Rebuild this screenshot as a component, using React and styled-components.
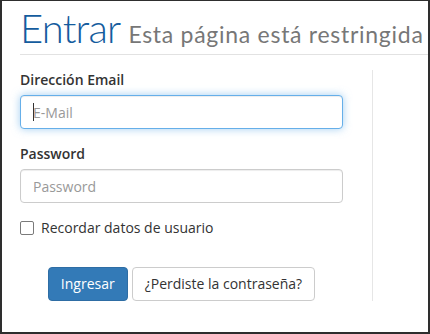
import React from "react";
import styled, { createGlobalStyle } from "styled-components";

const GlobalStyle = createGlobalStyle`
  html, body {
    margin: 0;
    padding: 0;
    background: #fff;
  }
  body {
    font-family: "Open Sans", "Liberation Sans", sans-serif;
    font-size: 14px;
    color: #333;
  }
`;

const Frame = styled.div`
  box-sizing: border-box;
  width: 430px;
  height: 334px;
  border: 2px solid #2e2e2e;
  border-top-width: 1px;
  padding-left: 18px;
  overflow: hidden;
  background: #fff;
`;

const Header = styled.h1`
  display: flex;
  align-items: baseline;
  gap: 8px;
  margin: 5px 0 0;
  padding-bottom: 4px;
  border-bottom: 1px solid #e2e2e2;
  font-family: Lato, "Liberation Sans", sans-serif;
  font-weight: 400;
  white-space: nowrap;
`;

const Title = styled.span`
  font-size: 40px;
  line-height: 44px;
  font-weight: 300;
  letter-spacing: -0.8px;
  color: #145c9e;
`;

const Sub = styled.small`
  font-size: 23px;
  line-height: 24px;
  font-weight: 400;
  letter-spacing: 0.72px;
  color: #777;
`;

const Row = styled.div`
  display: flex;
  margin-top: 15px;
`;

const Column = styled.form`
  box-sizing: border-box;
  width: 353px;
  padding-right: 29px;
  border-right: 1px solid #e6e6e6;
  display: flex;
  flex-direction: column;
`;

const Group = styled.div`
  margin-bottom: 15px;
`;

const Label = styled.label`
  display: block;
  font-weight: 600;
  font-size: 14px;
  line-height: 20px;
  margin-bottom: 5px;
  color: #333;
`;

const Field = styled.div`
  position: relative;
`;

const Input = styled.input`
  box-sizing: border-box;
  display: block;
  width: 100%;
  height: 34px;
  padding: 6px 12px;
  font-family: "Open Sans", "Liberation Sans", sans-serif;
  font-size: 14px;
  color: #555;
  background: #fff;
  border: 1px solid ${(p) => (p.$focused ? "#66afe9" : "#ccc")};
  border-radius: 4px;
  outline: none;
  box-shadow: ${(p) =>
    p.$focused
      ? "inset 0 1px 1px rgba(0,0,0,.075), 0 0 8px rgba(102,175,233,.6)"
      : "inset 0 1px 1px rgba(0,0,0,.075)"};

  &::placeholder {
    color: #999;
  }
`;

const Caret = styled.span`
  position: absolute;
  left: 13px;
  top: 8px;
  width: 1px;
  height: 18px;
  background: #333;
`;

const CheckRow = styled.label`
  display: flex;
  align-items: center;
  gap: 7px;
  line-height: 20px;
  font-size: 14px;
  color: #333;
`;

const Box = styled.span`
  box-sizing: border-box;
  width: 14px;
  height: 14px;
  border: 1px solid #7a7a7a;
  border-radius: 2px;
  background: #fff;
`;

const Buttons = styled.div`
  display: flex;
  justify-content: center;
  gap: 4px;
  margin-top: 29px;
`;

const Button = styled.button`
  box-sizing: border-box;
  height: 34px;
  padding: 6px 12px;
  font-family: "Open Sans", "Liberation Sans", sans-serif;
  font-size: 14px;
  line-height: 20px;
  border-radius: 4px;
  border: 1px solid ${(p) => (p.$primary ? "#2e6da4" : "#ccc")};
  background: ${(p) => (p.$primary ? "#337ab7" : "#fff")};
  color: ${(p) => (p.$primary ? "#fff" : "#333")};
`;

export default function App() {
  return (
    <>
      <GlobalStyle />
      <Frame>
        <Header>
          <Title>Entrar</Title>
          <Sub>Esta página está restringida</Sub>
        </Header>
        <Row>
          <Column onSubmit={(e) => e.preventDefault()}>
            <Group>
              <Label htmlFor="email">Dirección Email</Label>
              <Field>
                <Input id="email" $focused placeholder="E-Mail" />
                <Caret />
              </Field>
            </Group>
            <Group>
              <Label htmlFor="pass">Password</Label>
              <Input id="pass" type="password" placeholder="Password" />
            </Group>
            <CheckRow>
              <Box />
              Recordar datos de usuario
            </CheckRow>
            <Buttons>
              <Button type="submit" $primary>
                Ingresar
              </Button>
              <Button type="button">¿Perdiste la contraseña?</Button>
            </Buttons>
          </Column>
        </Row>
      </Frame>
    </>
  );
}
